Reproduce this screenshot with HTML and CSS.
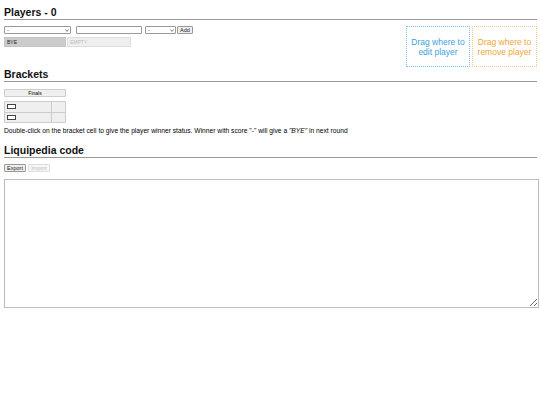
FILE: index.html
```html
<!DOCTYPE html>
<html>
<head>
<meta charset="utf-8">
<link rel="stylesheet" href="styles.css">
</head>
<body>
<h2 class="title">Players - 0</h2>
<div class="players">
  <div class="player-form">
    <div class="row">
      <span class="selwrap sel-wide"><select class="sel"><option>-</option></select><svg class="chev" viewBox="0 0 6 4"><path d="M0.5 0.8 L3 3.2 L5.5 0.8" fill="none" stroke="#333" stroke-width="1.1"/></svg></span>
      <input class="txt" type="text">
      <span class="selwrap sel-small"><select class="sel"><option>-</option></select><svg class="chev" viewBox="0 0 6 4"><path d="M0.5 0.8 L3 3.2 L5.5 0.8" fill="none" stroke="#333" stroke-width="1.1"/></svg></span>
      <button class="btn btn-add">Add</button>
    </div>
    <div class="row row-slots">
      <div class="slot slot-bye">BYE</div>
      <div class="slot slot-empty">EMPTY</div>
    </div>
  </div>
  <div class="zones">
    <div class="zone zone-edit">Drag where to edit player</div>
    <div class="zone zone-remove">Drag where to remove player</div>
  </div>
</div>
<h2 class="title">Brackets</h2>
<div class="bracket">
  <div class="round-head">Finals</div>
  <div class="match">
    <div class="mrow"><span class="name"><span class="box"></span></span><span class="score"></span></div>
    <div class="mrow"><span class="name"><span class="box"></span></span><span class="score"></span></div>
  </div>
</div>
<p class="note">Double-click on the bracket cell to give the player winner status. Winner with score "-" will give a <i>"BYE"</i> in next round</p>
<h2 class="title">Liquipedia code</h2>
<div class="actions">
  <button class="btn">Export</button>
  <button class="btn" disabled>Import</button>
</div>
<textarea class="code"></textarea>
</body>
</html>
```
FILE: styles.css
```css
html, body { background: #fff; }
body {
  margin: 0;
  padding: 5px 3px 0 4px;
  font-family: "Liberation Sans", Arial, sans-serif;
  color: #000;
}
.title {
  font-size: 10.5px;
  font-weight: bold;
  margin: 0;
  padding: 2px 0 1px;
  border-bottom: 1px solid #999;
  line-height: 11px;
  color: #111;
}
.players {
  display: flex;
  justify-content: space-between;
  padding-top: 6px;
}
.player-form { display: flex; flex-direction: column; gap: 3px; }
.row { display: flex; gap: 3px; align-items: center; }
.row-slots { gap: 1px; }
.sel, .txt, .btn {
  font-family: "Liberation Sans", Arial, sans-serif;
  font-size: 5.5px;
  box-sizing: border-box;
  margin: 0;
}
.selwrap { position: relative; display: block; height: 8px; }
.sel-wide { width: 67px; margin-right: 2px; }
.sel-small { width: 31px; margin-right: -2px; }
.sel {
  -webkit-appearance: none;
  appearance: none;
  display: block;
  width: 100%;
  height: 8px;
  padding: 0 2px;
  border: 1px solid #999;
  border-radius: 1px;
  background: #fff;
  color: #333;
  font-size: 6px;
  line-height: 6px;
}
.chev { position: absolute; right: 2px; top: 2.5px; width: 4px; height: 3px; }
.txt { width: 66px; height: 8px; border: 1px solid #999; border-radius: 1px; padding: 0; }
.btn {
  height: 8px;
  padding: 0 3px;
  border: 1px solid #999;
  border-radius: 1px;
  background: #efefef;
  line-height: 6px;
  color: #222;
}
.btn-add { width: 16px; padding: 0; }
.btn:disabled { color: #bbb; border-color: #ddd; background: #f7f7f7; }
.slot {
  font-size: 5px;
  height: 10px;
  line-height: 8px;
  box-sizing: border-box;
  padding-left: 2px;
}
.slot-bye { width: 62px; background: #ccc; border: 1px solid #c4c4c4; color: #222; }
.slot-empty { width: 64px; background: #efefef; color: #bbb; border: 1px solid #ddd; }
.zones { display: flex; }
.zone {
  width: 64px;
  height: 41px;
  box-sizing: border-box;
  border: 1px dotted;
  font-size: 8.5px;
  line-height: 10px;
  display: flex;
  align-items: center;
  justify-content: center;
  text-align: center;
}
.zone-edit { color: #3b9fe0; border-color: #7fc0ee; margin-right: 2px; }
.zone-remove { color: #f2a534; border-color: #f5c887; width: 65px; }
.bracket { width: 62px; padding-top: 7px; }
.round-head {
  font-size: 5px;
  text-align: center;
  height: 8px;
  line-height: 7px;
  background: #efefef;
  border: 1px solid #ccc;
  box-sizing: border-box;
  border-radius: 1px;
}
.match { margin-top: 4px; border: 1px solid #ccc; background: #efefef; border-radius: 1px; }
.mrow { display: flex; height: 9.5px; }
.mrow + .mrow { border-top: 1px solid #ccc; }
.name { flex: 1; display: flex; align-items: center; padding-left: 2px; border-right: 1px solid #ccc; }
.box { width: 7px; height: 3px; border: 1px solid #444; background: #fff; }
.score { width: 13px; }
.note { font-size: 6.7px; margin: 4px 0 8px; line-height: 8px; }
.actions { display: flex; gap: 2px; padding-top: 6px; }
.actions .btn { width: 22px; padding: 0; }
.code {
  display: block;
  margin-top: 7px;
  width: calc(100% + 2px);
  height: 129px;
  box-sizing: border-box;
  border: 1px solid #bbb;
}
```
